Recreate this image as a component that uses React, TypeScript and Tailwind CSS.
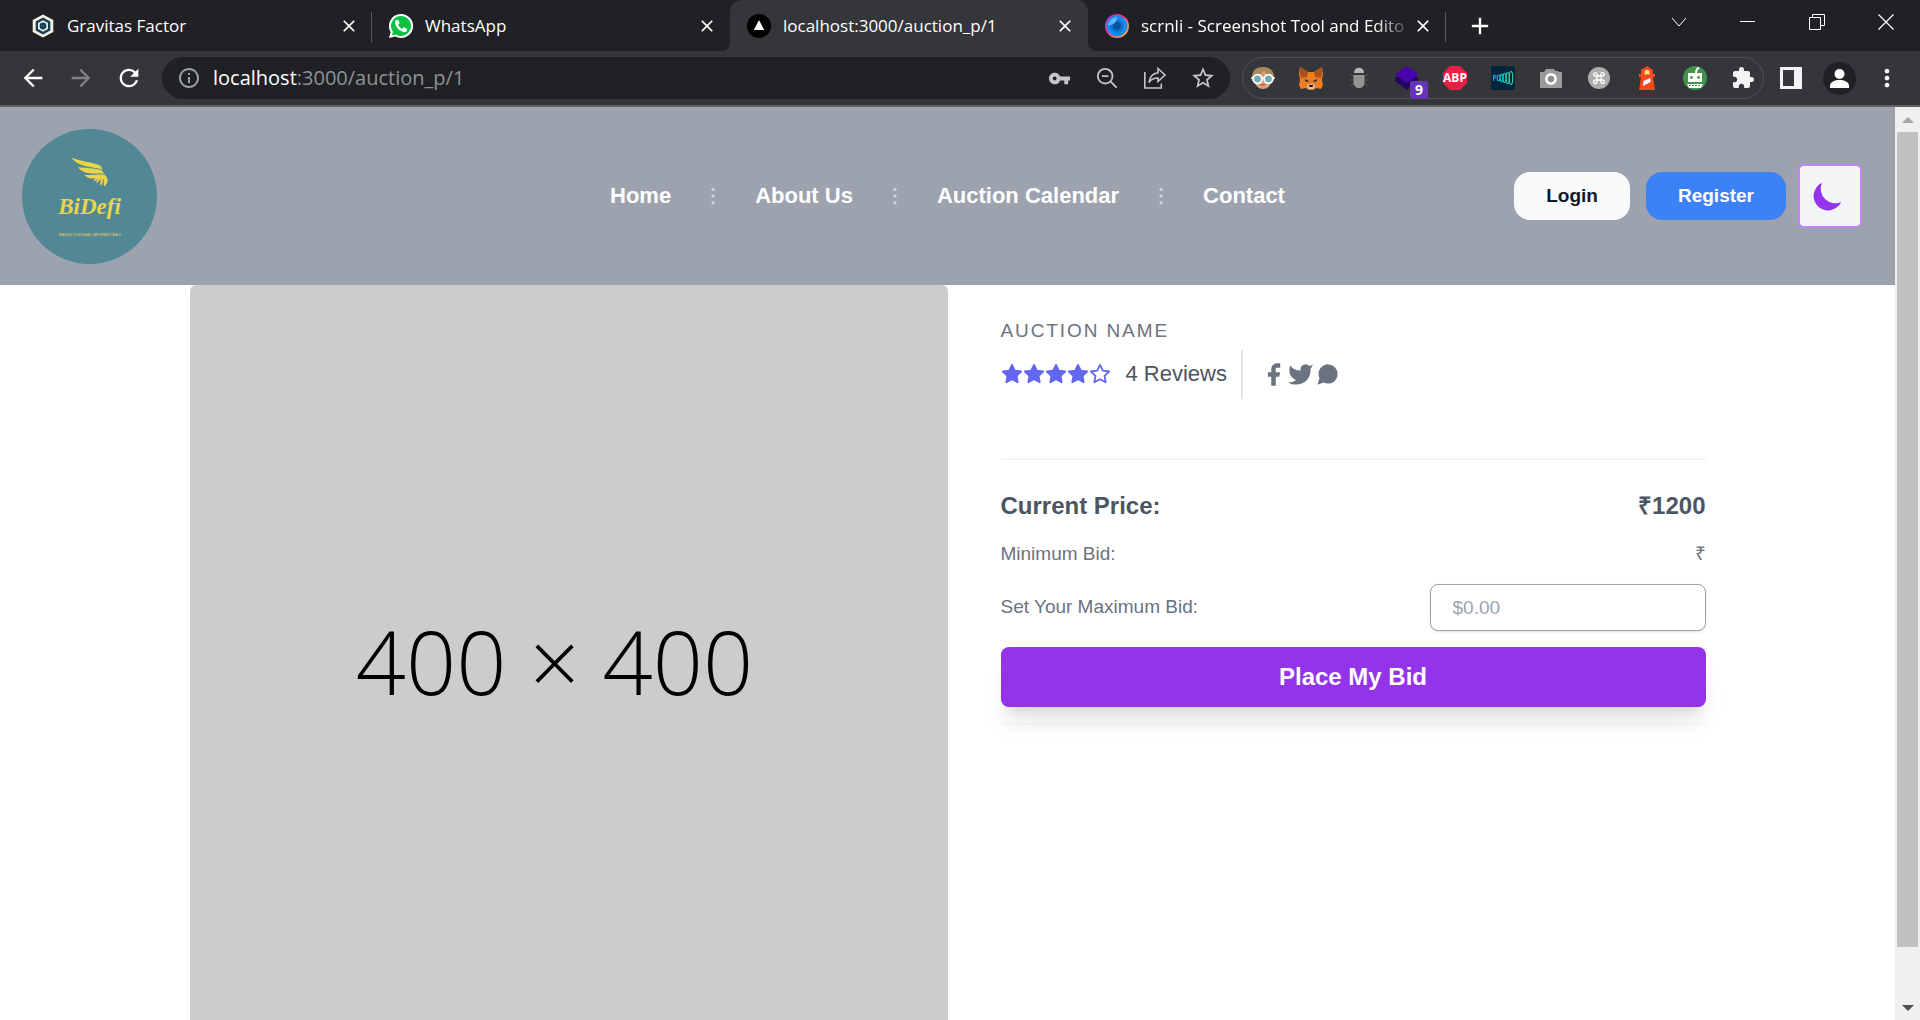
import React from "react";
import {
  MdArrowBack,
  MdArrowForward,
  MdRefresh,
  MdInfoOutline,
  MdVpnKey,
  MdStarBorder,
  MdExtension,
  MdClose,
  MdAdd,
  MdMoreVert,
  MdKeyboardCommandKey,
} from "react-icons/md";
import { FaPhoneAlt } from "react-icons/fa";

type IconProps = { className?: string };

const GravitasIcon = () => (
  <svg viewBox="0 0 24 24" className="size-6">
    <path d="M12 .5 22.3 6v12L12 23.5 1.700 18V6z" fill="#f5efe2" />
    <path d="M12 3.500 19.300 7.600v8.800L12 20.500 4.700 16.400V7.600z" fill="#123f57" />
    <path d="M12 6.300 17 9v6l-5 2.800L7 15V9z" fill="#f5efe2" />
    <circle cx="12" cy="12" r="3.400" fill="#123f57" />
    <circle cx="12" cy="12" r="1.200" fill="#0b6b83" />
  </svg>
);

const WhatsAppIcon = () => (
  <span className="relative block size-6">
    <svg viewBox="0 0 24 24" className="size-6">
      <path d="M12 0a12 12 0 1 1-5.700 22.500L0 24l1.600-6A12 12 0 0 1 12 0z" fill="#fff" />
      <path d="M12 2a10 10 0 1 1-5.300 18.500L2.900 21.500l1-3.700A10 10 0 0 1 12 2z" fill="#0cc143" />
    </svg>
    <FaPhoneAlt className="absolute top-1.5 left-1.5 size-3 text-white" />
  </span>
);

const TriangleIcon = () => (
  <svg viewBox="0 0 24 24" className="size-6">
    <circle cx="12" cy="12" r="12" fill="#000" />
    <path d="m12 6 5.200 10H6.800z" fill="#fff" />
  </svg>
);

const ScrnliIcon = () => (
  <svg viewBox="0 0 24 24" className="size-6">
    <defs>
      <linearGradient id="ring" x1="0" y1="0" x2="1" y2="1">
        <stop offset="0" stopColor="#8a3ffc" />
        <stop offset=".4" stopColor="#f0338a" />
        <stop offset="1" stopColor="#ffc23d" />
      </linearGradient>
    </defs>
    <circle cx="12" cy="12" r="12" fill="url(#ring)" />
    <circle cx="12" cy="12" r="10.300" fill="#0d8df5" />
    <circle cx="12" cy="12" r="6.800" fill="#0873d1" />
    <circle cx="12" cy="12" r="4" fill="#0553a3" />
    <path d="M3 11a9.500 9.500 0 0 1 9-8c1 4-4 9-9 8z" fill="#7cc8ff" opacity=".75" />
  </svg>
);

const ZoomOutIcon = ({ className }: IconProps) => (
  <svg viewBox="0 0 24 24" className={className} fill="none" stroke="currentColor" strokeWidth="2">
    <circle cx="10" cy="10" r="8" />
    <path d="M6.500 10h7M16 16l6.500 6.500" />
  </svg>
);

const ShareIcon = ({ className }: IconProps) => (
  <svg viewBox="0 0 24 24" className={className} fill="none" stroke="currentColor" strokeWidth="1.600">
    <path d="M1.800 6v16h16.500v-4.500" />
    <path d="M15 2.500 22 9l-7 6.500V12c-4 0-7 1.200-9 4.500.6-5 3.500-9 9-9.800z" />
  </svg>
);

const GirlIcon = () => (
  <svg viewBox="0 0 24 24" className="size-6">
    <path d="M1 14C0 4 6 1 12 1s12 3 11 13c-2 3-20 3-22 0z" fill="#a98a5e" />
    <path d="M4 10c4-1 7-3 9-5 2 3 4 4 7 5v5c0 5-4 8-8 8s-8-3-8-8z" fill="#dba07a" />
    <path d="M9 18h6c-1 2-5 2-6 0z" fill="#c2574a" />
    <g fill="#74a9b5" stroke="#fff" strokeWidth="1.800">
      <circle cx="6.500" cy="13" r="4.300" />
      <circle cx="17.500" cy="13" r="4.300" />
    </g>
    <path d="M10.500 12h3M0 12h2M22 12h2" stroke="#fff" strokeWidth="1.500" />
  </svg>
);

const FoxIcon = () => (
  <svg viewBox="0 0 24 24" className="size-6">
    <path d="m1 1 8 5h6l8-5 1 7-1 6 1 5-2 4-5-1-3 2h-4l-3-2-5 1-2-4 1-5-1-6z" fill="#ee7d20" />
    <path d="m1 1 8 5-1 5-6 1-1-5zM23 1l-8 5 1 5 6 1 1-5z" fill="#a65324" />
    <path d="m6 13 4 2-1 1-3-1zM18 13l-4 2 1 1 3-1z" fill="#2b2f3a" />
    <path d="m8 19 4-1 4 1-1 4H9z" fill="#d8c1b3" />
    <path d="M10 19h4l-.5 2h-3z" fill="#161616" />
  </svg>
);

const BugIcon = () => (
  <svg viewBox="0 0 24 24" className="size-6">
    <g fill="none" stroke="#4d4e52" strokeWidth="1.200">
      <path d="M7 11 3 8M6.500 14H2M7 17l-4 3M17 11l4-3M17.500 14H22M17 17l4 3" />
    </g>
    <path d="M7 7c0-7 10-7 10 0z" fill="#b5b5b5" />
    <path d="M6.500 9h11v7c0 8-11 8-11 0z" fill="#949494" />
  </svg>
);

const CubeIcon = () => (
  <span className="relative block size-6">
    <svg viewBox="0 0 24 24" className="size-6">
      <path d="m0 12 3-2 9 6 9-6 3 3-12 11L0 15z" fill="#220562" />
      <path d="M12 0 24 8.500 12 17 0 8.500z" fill="#4703ad" />
    </svg>
    <span className="absolute top-[15px] left-[15px] flex size-[18px] items-center justify-center rounded-xs bg-[#6534b9] font-['Open_Sans',sans-serif] text-sm leading-none font-bold text-white">
      9
    </span>
  </span>
);

const AbpIcon = () => (
  <span className="relative flex size-6 items-center justify-center">
    <svg viewBox="0 0 24 24" className="absolute inset-0 size-6">
      <path d="M7 0h10l7 7v10l-7 7H7l-7-7V7z" fill="#ed1e45" />
    </svg>
    <span className="relative font-['Open_Sans',sans-serif] text-xs leading-none font-bold text-white">ABP</span>
  </span>
);

const WaveIcon = () => (
  <svg viewBox="0 0 24 24" className="size-6">
    <rect width="24" height="24" rx="2" fill="#04263d" />
    <g fill="none" strokeWidth="1.100">
      <path d="M2.500 15V9.500c3-1 3.500 2 .5 2.500" stroke="#1b9fd6" />
      <ellipse cx="7.500" cy="12" rx="1.300" ry="2.800" stroke="#1cb3d3" />
      <ellipse cx="10.500" cy="12" rx="1.400" ry="3.600" stroke="#1cc3cf" />
      <ellipse cx="13.500" cy="12" rx="1.500" ry="4.500" stroke="#22cfc0" />
      <ellipse cx="16.700" cy="12" rx="1.600" ry="5.500" stroke="#29d9ae" />
      <ellipse cx="20" cy="12" rx="1.700" ry="6.500" stroke="#2fe39b" />
    </g>
  </svg>
);

const CameraIcon = () => (
  <svg viewBox="0 0 24 24" className="size-6">
    <path d="M7 3h8l1.500 2H19l1 1h3v16H1V6h4z" fill="#9b9b9b" />
    <circle cx="12" cy="13" r="4.600" fill="#8c8c8c" stroke="#fff" strokeWidth="2.600" />
  </svg>
);

const CommandIcon = () => (
  <span className="flex size-[22px] items-center justify-center rounded-full bg-[#adadad]">
    <MdKeyboardCommandKey className="size-4 text-white" />
  </span>
);

const LighthouseIcon = () => (
  <svg viewBox="0 0 24 24" className="size-6">
    <path d="m12 0 6 4v4h2v3h-2l2 13H4l2-13H4V8h2V4z" fill="#f4481e" />
    <path d="M9.500 5 12 3.500 14.500 5v3.500h-5z" fill="#fbe47a" />
    <path d="m8.500 15 7-3v4l-7.500 4z" fill="#fff" />
  </svg>
);

const RobotIcon = () => (
  <svg viewBox="0 0 24 24" className="size-6">
    <circle cx="12" cy="12" r="12" fill="#43934e" />
    <path d="M12 7c0-3 1-5 3-6l2 1c-2 1-3 3-3 5h5v9H5V7z" fill="#fff" />
    <path d="M4 18h16l-2 4H6z" fill="#fff" />
    <path d="M6 19.500h12" stroke="#43934e" strokeDasharray="2 1" />
    <circle cx="8.500" cy="11.500" r="1.400" fill="#43934e" />
    <circle cx="15.500" cy="11.500" r="1.400" fill="#43934e" />
  </svg>
);

const SidePanelIcon = () => (
  <svg viewBox="0 0 22 22" className="size-[22px]">
    <path fillRule="evenodd" d="M0 0h22v22H0zM3 3v16h11V3z" fill="#f1f3f4" />
  </svg>
);

const ProfileIcon = () => (
  <svg viewBox="0 0 33 33" className="size-[33px]">
    <circle cx="16.500" cy="16.500" r="16.500" fill="#202124" />
    <circle cx="16.500" cy="12" r="5" fill="#fff" />
    <path d="M7 26v-2.500c0-3.500 5-5.500 9.500-5.500s9.500 2 9.500 5.500V26z" fill="#fff" />
  </svg>
);

type TabProps = {
  icon: React.ReactNode;
  title: string;
  active?: boolean;
  divider?: boolean;
  fade?: boolean;
};

function BrowserTab({ icon, title, active, divider, fade }: TabProps) {
  return (
    <div
      className={`relative flex max-w-[358px] min-w-0 flex-1 items-center pr-[13px] pl-[17px] ${
        active ? "rounded-t-xl bg-[#35363a]" : ""
      }`}
    >
      {active && (
        <>
          <svg viewBox="0 0 8 8" className="absolute bottom-0 -left-2 size-2 text-[#35363a]">
            <path d="M8 0v8H0a8 8 0 0 0 8-8z" fill="currentColor" />
          </svg>
          <svg viewBox="0 0 8 8" className="absolute -right-2 bottom-0 size-2 text-[#35363a]">
            <path d="M0 0v8h8a8 8 0 0 1-8-8z" fill="currentColor" />
          </svg>
        </>
      )}
      <span className="shrink-0">{icon}</span>
      <span
        className={`ml-3 min-w-0 flex-1 text-[17px] whitespace-nowrap text-white ${
          fade ? "[mask-image:linear-gradient(to_right,black_86%,transparent)]" : ""
        }`}
      >
        {title}
      </span>
      <button aria-label={`Close ${title}`} className="shrink-0 text-white">
        <MdClose className="size-5" />
      </button>
      {divider && <span className="absolute top-3 right-0 h-[30px] w-px bg-[#5a5b5f]" />}
    </div>
  );
}

function BrowserChrome() {
  const cell = "flex w-12 shrink-0 items-center justify-center";
  return (
    <header className="shrink-0 border-b-2 border-[#5f6368] bg-[#35363a] font-['Open_Sans',sans-serif]">
      <div className="flex h-[51px] bg-[#202124] pl-[14px]">
        <div className="flex min-w-0 flex-1">
          <BrowserTab icon={<GravitasIcon />} title="Gravitas Factor" divider />
          <BrowserTab icon={<WhatsAppIcon />} title="WhatsApp" />
          <BrowserTab icon={<TriangleIcon />} title="localhost:3000/auction_p/1" active />
          <BrowserTab icon={<ScrnliIcon />} title="scrnli - Screenshot Tool and Edito" divider fade />
          <button aria-label="New tab" className="ml-5 text-white">
            <MdAdd className="size-7" />
          </button>
        </div>
        <div className="flex h-[43px] text-white">
          <button aria-label="Search tabs" className="flex w-[69px] items-center justify-center">
            <svg viewBox="0 0 16 16" className="size-4" fill="none" stroke="currentColor">
              <path d="m1 4 7 8 7-8" />
            </svg>
          </button>
          <button aria-label="Minimize" className="flex w-[69px] items-center justify-center">
            <span className="h-px w-[15px] bg-white" />
          </button>
          <button aria-label="Restore" className="flex w-[69px] items-center justify-center">
            <svg viewBox="0 0 16 16" className="size-4" fill="none" stroke="currentColor">
              <path d="M.5 3.500h11v12H.5zM3.500 3.500v-3h12v11h-4" />
            </svg>
          </button>
          <button aria-label="Close window" className="flex w-[69px] items-center justify-center">
            <svg viewBox="0 0 16 16" className="size-4" fill="none" stroke="currentColor" strokeWidth="1.200">
              <path d="m.5.5 15 15M15.500.5l-15 15" />
            </svg>
          </button>
        </div>
      </div>

      <div className="flex h-[54px] items-center pr-[9px] pl-[9px] text-white">
        <button aria-label="Back" className={cell}>
          <MdArrowBack className="size-7" />
        </button>
        <button aria-label="Forward" className={`${cell} text-[#808185]`}>
          <MdArrowForward className="size-7" />
        </button>
        <button aria-label="Reload" className={cell}>
          <MdRefresh className="size-7" />
        </button>
        <div className="ml-[9px] flex h-[42px] min-w-0 flex-1 items-center rounded-full bg-[#202124] pr-[3px] pl-[15px] text-[#c4c5c7]">
          <MdInfoOutline className="size-6 shrink-0 text-[#9aa0a6]" />
          <div className="ml-3 min-w-0 flex-1 truncate text-xl text-[#8e9196]">
            <span className="text-white">localhost</span>:3000/auction_p/1
          </div>
          <button aria-label="Passwords" className={cell}>
            <MdVpnKey className="size-[23px]" />
          </button>
          <button aria-label="Zoom" className={cell}>
            <ZoomOutIcon className="size-[22px]" />
          </button>
          <button aria-label="Share" className={cell}>
            <ShareIcon className="size-6" />
          </button>
          <button aria-label="Bookmark" className={cell}>
            <MdStarBorder className="size-[26px]" />
          </button>
        </div>
        <div className="ml-3 flex h-[42px] items-center gap-6 rounded-full border border-[#505155] px-2">
          <GirlIcon />
          <FoxIcon />
          <BugIcon />
          <CubeIcon />
          <AbpIcon />
          <WaveIcon />
          <CameraIcon />
          <span className="flex size-6 items-center justify-center">
            <CommandIcon />
          </span>
          <LighthouseIcon />
          <RobotIcon />
          <button aria-label="Extensions">
            <MdExtension className="size-6 text-[#f1f3f4]" />
          </button>
        </div>
        <button aria-label="Side panel" className={`${cell} ml-[3px]`}>
          <SidePanelIcon />
        </button>
        <button aria-label="Profile" className={cell}>
          <ProfileIcon />
        </button>
        <button aria-label="Menu" className={cell}>
          <MdMoreVert className="size-7" />
        </button>
      </div>
    </header>
  );
}

function Logo() {
  return (
    <a
      href="#"
      className="flex size-[135px] flex-col items-center rounded-full bg-[#528796] pt-7 text-[#e9d54c]"
    >
      <svg viewBox="0 0 38 30" className="h-[30px] w-[38px]" fill="currentColor">
        <path d="M0 .5C10 4.500 20 5 28 8c2 1 3 2.500 3.500 4.500C21 9.500 8 10.500 0 .5z" />
        <path d="M7 10c8 1.500 17 .5 24 3.500l2 3C24 16.500 12 18 7 10z" />
        <path d="M13.500 18c7 .5 13-1 20-.5l3 4c.5 3-.5 6-3.500 8-.8-3 .5-5-.5-8-1 3-.8 6-3.300 7-.5-3 1-4.500.3-7-1 2-2.300 4-4.500 4.500 0-2 1.300-2.800 1.700-4.500-1.200 1.500-2.500 2.500-4.200 2.500.3-1.300 1-1.800 1.500-3-4 1-8 0-10.500-3z" />
      </svg>
      <span className="mt-1 font-['Liberation_Serif',serif] text-[23px] leading-8 font-bold italic">BiDefi</span>
      <span className="mt-2.5 text-[3px] leading-1 whitespace-nowrap">
        TRADING YOUR IDEAS, IMPORTANT DEALS
      </span>
    </a>
  );
}

const links = ["Home", "About Us", "Auction Calendar", "Contact"];

function SiteHeader() {
  return (
    <header className="grid grid-cols-[1fr_auto_1fr] items-center bg-[#9ca3af] px-[22px] pt-[22px] pb-[21px]">
      <Logo />
      <nav className="flex items-center gap-8 pb-0.5 text-[22px] leading-7 font-bold text-white">
        {links.map((link, i) => (
          <React.Fragment key={link}>
            {i > 0 && (
              <svg viewBox="0 0 24 24" className="size-5 text-[#d1d5db]" fill="currentColor">
                <circle cx="12" cy="4" r="1.900" />
                <circle cx="12" cy="12" r="1.900" />
                <circle cx="12" cy="20" r="1.900" />
              </svg>
            )}
            <a href="#">{link}</a>
          </React.Fragment>
        ))}
      </nav>
      <div className="flex items-center justify-end pr-[11px] pb-0.5 text-[19px] leading-6 font-bold">
        <button className="h-12 rounded-2xl bg-[#f9fafb] px-8 text-[#111827]">Login</button>
        <button className="ml-4 h-12 rounded-2xl bg-[#3b82f6] px-8 text-white">Register</button>
        <button
          aria-label="Toggle dark mode"
          className="ml-3 flex size-16 items-center justify-center rounded-md border-2 border-[#c084fc] bg-[#f3f4f6] pr-1 text-[#9333ea]"
        >
          <svg viewBox="0 0 20 20" className="size-9" fill="currentColor">
            <path d="M17.293 13.293A8 8 0 0 1 6.707 2.707a8.001 8.001 0 1 0 10.586 10.586z" />
          </svg>
        </button>
      </div>
    </header>
  );
}

function Star({ filled }: { filled: boolean }) {
  return (
    <svg
      viewBox="0 0 24 24"
      className="size-[22px] text-[#6366f1]"
      fill={filled ? "currentColor" : "none"}
      stroke="currentColor"
      strokeWidth="2"
      strokeLinecap="round"
      strokeLinejoin="round"
    >
      <path d="M12 2l3.090 6.260L22 9.270l-5 4.870 1.180 6.880L12 17.770l-6.180 3.250L7 14.140 2 9.270l6.910-1.010L12 2z" />
    </svg>
  );
}

const socials = [
  {
    name: "Facebook",
    d: "M18 2h-3a5 5 0 00-5 5v3H7v4h3v8h4v-8h3l1-4h-4V7a1 1 0 011-1h3z",
  },
  {
    name: "Twitter",
    d: "M23 3a10.900 10.900 0 01-3.140 1.530 4.480 4.480 0 00-7.860 3v1A10.660 10.660 0 013 4s-4 9 5 13a11.640 11.640 0 01-7 2c9 5 20 0 20-11.500a4.500 4.500 0 00-.080-.830A7.720 7.720 0 0023 3z",
  },
  {
    name: "Chat",
    d: "M21 11.500a8.380 8.380 0 01-.9 3.800 8.500 8.500 0 01-7.600 4.700 8.380 8.380 0 01-3.800-.9L3 21l1.900-5.700a8.380 8.380 0 01-.9-3.800 8.500 8.500 0 014.700-7.600 8.380 8.380 0 013.800-.9h.5a8.480 8.480 0 018 8v.5z",
  },
];

function AuctionDetails() {
  return (
    <section className="w-1/2 pt-8 pl-[53px] text-[19px] leading-7 text-[#6b7280]">
      <h2 className="tracking-widest">AUCTION NAME</h2>
      <div className="mt-[5px] flex h-[49px] items-center">
        <span className="flex pb-0.5">
          {[1, 2, 3, 4, 5].map((n) => (
            <Star key={n} filled={n < 5} />
          ))}
        </span>
        <span className="ml-[15px] pb-0.5 text-[22px] text-[#4b5563]">4 Reviews</span>
        <span className="ml-3.5 flex h-full items-center border-l-2 border-[#e5e7eb] pl-[17px]">
          {socials.map((s) => (
            <a key={s.name} href="#" aria-label={s.name}>
              <svg viewBox="0 0 24 24" className="size-[27px]" fill="currentColor">
                <path d={s.d} />
              </svg>
            </a>
          ))}
        </span>
      </div>
      <div className="mt-[59px] h-0.5 bg-[#f3f4f6]" />
      <div className="mt-[30px] flex justify-between text-2xl font-bold text-[#4b5563]">
        <span>Current Price:</span>
        <span>₹1200</span>
      </div>
      <div className="mt-[18px] flex justify-between">
        <span>Minimum Bid:</span>
        <span>₹</span>
      </div>
      <div className="mt-4 flex items-center justify-between">
        <label htmlFor="max-bid" className="pb-0.5">
          Set Your Maximum Bid:
        </label>
        <input
          id="max-bid"
          type="text"
          placeholder="$0.00"
          className="h-[47px] w-[276px] rounded-lg border border-[#9ca3af] bg-white px-[22px] shadow-sm placeholder:text-[#9ca3af]"
        />
      </div>
      <button className="mt-4 h-[60px] w-full rounded-lg bg-[#9333ea] text-2xl font-bold text-white shadow-xl">
        Place My Bid
      </button>
      <div className="mt-4 h-px bg-[#f5f5f6]" />
    </section>
  );
}

function Scrollbar() {
  return (
    <div className="flex w-[25px] shrink-0 flex-col items-center bg-[#f0f0f0]">
      <svg viewBox="0 0 12 6" className="mt-2.5 h-1.5 w-3 shrink-0">
        <path d="M6 0l6 6H0z" fill="#a3a3a3" />
      </svg>
      <div className="mt-[9px] w-[21px] basis-[815px] bg-[#c1c1c1]" />
      <svg viewBox="0 0 12 6" className="mt-auto mb-[9px] h-1.5 w-3 shrink-0">
        <path d="M0 0h12L6 6z" fill="#505050" />
      </svg>
    </div>
  );
}

export default function App() {
  return (
    <div className="flex h-screen flex-col overflow-hidden bg-white">
      <BrowserChrome />
      <div className="flex min-h-0 flex-1">
        <div className="min-w-0 flex-1 overflow-hidden font-['Liberation_Sans',Arial,sans-serif]">
          <SiteHeader />
          <main className="mx-auto flex w-4/5 items-start">
            <div className="flex aspect-square w-1/2 items-center justify-center rounded-md bg-[#cccccc] pr-7 pb-1.5 font-['Open_Sans',sans-serif] text-[88px] leading-none font-light whitespace-nowrap text-black">
              400 × 400
            </div>
            <AuctionDetails />
          </main>
        </div>
        <Scrollbar />
      </div>
    </div>
  );
}
